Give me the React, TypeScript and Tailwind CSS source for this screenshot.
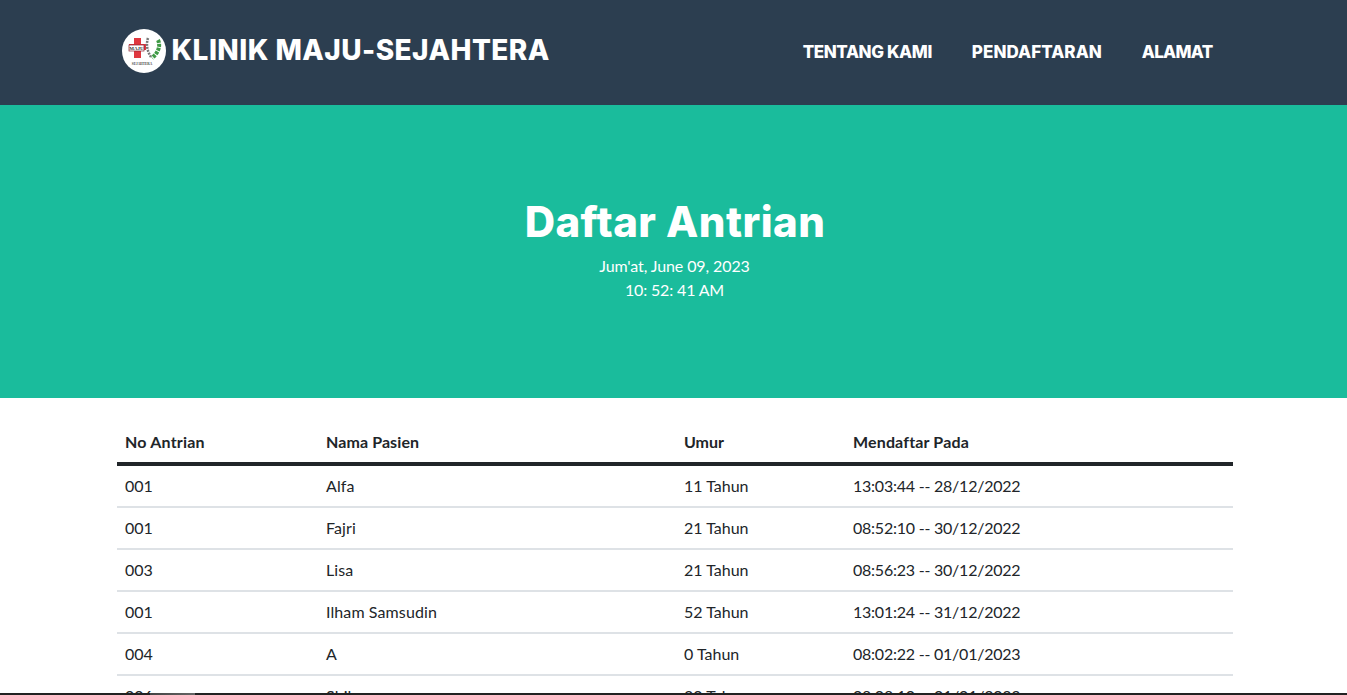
import React from 'react';

const rows = [
  ['001', 'Alfa', '11 Tahun', '13:03:44 -- 28/12/2022'],
  ['001', 'Fajri', '21 Tahun', '08:52:10 -- 30/12/2022'],
  ['003', 'Lisa', '21 Tahun', '08:56:23 -- 30/12/2022'],
  ['001', 'Ilham Samsudin', '52 Tahun', '13:01:24 -- 31/12/2022'],
  ['004', 'A', '0 Tahun', '08:02:22 -- 01/01/2023'],
  ['006', 'Shila', '20 Tahun', '08:08:10 -- 01/01/2023'],
];

const Logo = () => (
  <svg viewBox="0 0 44 44" className="w-[44px] h-[44px] shrink-0">
    <circle cx="22" cy="22" r="22" fill="#fff" />
    <path d="M12 9h7v6h5v6h-5v8h-7v-8H7v-6h5z" fill="#e0373f" />
    <rect x="7" y="16" width="15" height="6" fill="#fff" stroke="#8a2030" strokeWidth="0.7" />
    <text x="14.500" y="21" textAnchor="middle" fontSize="5" fontWeight="700" fill="#333" className="font-['Liberation_Serif',serif]">MAJU</text>
    <path d="M26 9c-2 6-1 13 3 19" fill="none" stroke="#777" strokeWidth="2.500" strokeDasharray="2 1" />
    <path d="M36 11c3 6 0 13-6 18" fill="none" stroke="#3f9a45" strokeWidth="4" strokeDasharray="3 1" />
    <text x="20" y="36" textAnchor="middle" fontSize="3.400" fontWeight="700" fill="#444" className="font-['Liberation_Serif',serif]">SEJAHTERA</text>
  </svg>
);

export default function App() {
  return (
    <div className="relative h-screen overflow-hidden bg-white font-['Lato','Liberation_Sans',sans-serif] text-[#212529]">
      <nav className="h-[105px] bg-[#2c3e50] text-white font-['Inter','Liberation_Sans',sans-serif]">
        <div className="w-[1140px] mx-auto flex items-center justify-between pl-[18px] pr-[31px] h-full">
          <div className="flex items-center gap-[6px] -mt-[3px]">
            <Logo />
            <span className="text-[28px] font-extrabold leading-[44px] mb-[2px] tracking-[0.45px]">KLINIK MAJU-SEJAHTERA</span>
          </div>
          <div className="flex gap-[40px] text-[17px] font-extrabold">
            <a className="tracking-[-0.4px]">TENTANG KAMI</a>
            <a className="tracking-[0.05px]">PENDAFTARAN</a>
            <a className="tracking-[-0.7px]">ALAMAT</a>
          </div>
        </div>
      </nav>
      <header className="h-[293px] bg-[#1abc9c] text-white text-center pt-[90px]">
        <h1 className="font-['Inter','Liberation_Sans',sans-serif] text-[42px] font-extrabold leading-[54px] pl-[3px] tracking-[0.45px]">Daftar Antrian</h1>
        <p className="text-[16px] leading-[24px] mt-[5px] pl-[2px] tracking-[-0.1px]">Jum'at, June 09, 2023</p>
        <p className="text-[16px] leading-[24px] pl-[2px] tracking-[-0.15px]">10: 52: 41 AM</p>
      </header>
      <div className="w-[1116px] ml-[117px] mt-[25px]">
        <table className="w-full border-collapse text-[16px] text-left">
          <thead>
            <tr className="border-b-[4px] border-[#212529]">
              <th className="w-[201px] px-2 pb-[1px] h-[41px] font-bold tracking-[0.2px]">No Antrian</th>
              <th className="w-[358px] px-2 pb-[1px] font-bold tracking-[0.1px]">Nama Pasien</th>
              <th className="w-[169px] px-2 pb-[1px] font-bold">Umur</th>
              <th className="px-2 pb-[1px] font-bold tracking-[0.15px]">Mendaftar Pada</th>
            </tr>
          </thead>
          <tbody>
            {rows.map((r, i) => (
              <tr key={i} className={i === 0 ? 'border-b-2 border-[#dee2e6] h-[43px]' : 'border-b-2 border-[#dee2e6] h-[42px]'}>
                <td className="px-2">{r[0]}</td>
                <td className="px-2 tracking-[0.1px]">{r[1]}</td>
                <td className="px-2">{r[2]}</td>
                <td className="px-2 tracking-[-0.23px]">{r[3]}</td>
              </tr>
            ))}
          </tbody>
        </table>
      </div>
      <div className="absolute bottom-0 inset-x-0 h-[2px] bg-[#222]">
        <div className="ml-[150px] w-[45px] h-full bg-gradient-to-r from-[#444] to-[#666]" />
      </div>
    </div>
  );
}
